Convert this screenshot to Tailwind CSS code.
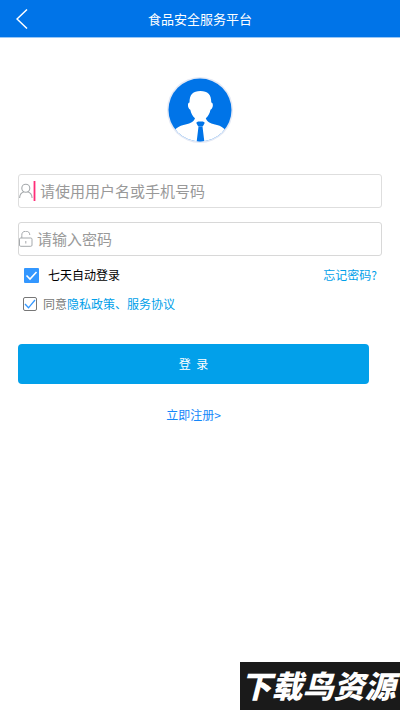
<!DOCTYPE html>
<html lang="zh-CN">
<head>
<meta charset="utf-8">
<meta name="viewport" content="width=device-width, initial-scale=1">
<title>食品安全服务平台</title>
<script src="https://cdn.jsdelivr.net/npm/@tailwindcss/browser@4"></script>
</head>
<body class="relative flex min-h-screen flex-col bg-white font-['Noto_Sans_CJK_SC',sans-serif] text-xs text-black">
<header class="grid h-[38px] grid-cols-[48px_1fr_48px] items-center border-b border-[#99c7f5] bg-[#0074e8] text-white">
  <button type="button" aria-label="返回" class="flex h-full items-center pl-4">
    <svg class="h-5 w-3" viewBox="0 0 12 20" fill="none" stroke="currentColor" stroke-width="1.5"><path d="M11 .5 1 10l10 9.500"/></svg>
  </button>
  <h1 class="text-center text-[13px] leading-[18px]">食品安全服务平台</h1>
</header>
<main class="flex flex-col px-[18px] pt-[38px]">
  <svg class="size-[68px] self-center" viewBox="0 0 68 68" role="img" aria-label="用户头像">
    <defs><clipPath id="disc"><circle cx="34" cy="34" r="31.500"/></clipPath></defs>
    <circle cx="34" cy="34" r="33" fill="#e4e9f5"/>
    <circle cx="34" cy="34" r="31.500" fill="#0074e8"/>
    <g clip-path="url(#disc)">
      <path fill="#fff" d="M34.400 15C27 15 23.500 18.500 23.500 26.500c-2.200.2-2.200 5.500.8 7.200.8 3.800 2.500 6.600 4.700 8.600-1.500 4.200-6 5.700-11.500 6.700-3.800.8-6.500 2.500-9.500 5.500V68h52V54.500c-3-3-5.200-4.700-9-5.500-5.500-1-9.700-2.500-11.200-6.700 2.200-2 3.900-4.800 4.700-8.600 3-1.700 3-7 .8-7.200C45.300 18.500 41.800 15 34.400 15Z"/>
      <path fill="#0074e8" d="M32 45.500h5l1.800 1.200-1.900 3.500h-4.800L30.200 46.700ZM32.500 50.500h4L38.500 67h-8Z"/>
    </g>
  </svg>
  <form class="mt-[30px] flex flex-col">
    <label class="flex h-[34px] items-center rounded-[3px] border border-[#dedede] text-[15px]">
      <svg class="h-4 w-[14px] shrink-0" viewBox="0 0 14 16" fill="none" stroke="#a5a9ac" stroke-width="1.100"><circle cx="6.800" cy="5.200" r="4"/><path d="M.6 15c.2-3.400 2-5.500 4.400-6.200M8.600 8.800c2.500.7 4.300 2.800 4.500 6.200"/></svg>
      <span class="ml-px h-5 w-px bg-[#ff2d78] outline-[#ff2d78]/40 outline-1 -outline-offset-1"></span>
      <input type="text" aria-label="用户名或手机号码" placeholder="请使用用户名或手机号码" class="ml-[5px] min-w-0 flex-1 bg-transparent leading-6 outline-none placeholder:text-[#999]">
    </label>
    <label class="mt-[14px] flex h-[34px] items-center rounded-[3px] border border-[#d8d8d8] text-[15px]">
      <svg class="h-4 w-[14px] shrink-0" viewBox="0 0 14 16" fill="none" stroke="#a5a9ac"><rect x=".5" y="7" width="12.500" height="8.300" rx="1.200"/><path d="M2.800 7V4.500a4 4 0 0 1 8-.5M6.800 10v2.500"/></svg>
      <input type="password" aria-label="密码" placeholder="请输入密码" class="ml-1 min-w-0 flex-1 bg-transparent leading-6 outline-none placeholder:text-[#999]">
    </label>
    <div class="mt-[9px] flex items-center justify-between pr-[5px] pl-[6px] leading-5">
      <label class="flex items-center">
        <span class="grid size-[15px] place-items-center">
          <input type="checkbox" checked class="col-start-1 row-start-1 size-[15px] appearance-none rounded-[1px] bg-[#3397ff]">
          <svg class="pointer-events-none col-start-1 row-start-1 size-[15px]" viewBox="0 0 15 15" fill="none" stroke="#fff" stroke-width="1.600"><path d="m2.500 7.500 3.500 3.500 6.500-7"/></svg>
        </span>
        <span class="ml-[9px]">七天自动登录</span>
      </label>
      <a href="#" class="text-[#00a0e9]">忘记密码?</a>
    </div>
    <div class="mt-[9px] flex items-center pl-[5px] leading-5">
      <span class="grid size-[14px] place-items-center">
        <input id="agree" type="checkbox" checked class="col-start-1 row-start-1 size-[14px] appearance-none rounded-[2px] border border-[#777] bg-white">
        <svg class="pointer-events-none col-start-1 row-start-1 size-[14px]" viewBox="0 0 14 14" fill="none" stroke="#3397ff" stroke-width="1.300"><path d="m2 7 3.500 3.800L12 3"/></svg>
      </span>
      <label for="agree" class="ml-[6px] text-[#777]">同意</label>
      <a href="#" class="text-[#00a0e9]">隐私政策、服务协议</a>
    </div>
    <div class="mt-[30px] flex flex-col items-center pr-[13px]">
      <button type="submit" class="h-10 w-full rounded-[4px] bg-[#02a0ea] leading-5 text-white">登&nbsp;&nbsp;录</button>
      <a href="#" class="mt-[21px] leading-5 text-[#1487fa]">立即注册&gt;</a>
    </div>
  </form>
</main>
<div class="absolute right-0 bottom-0 flex h-12 w-40 items-center justify-center bg-[#1a1a1a] pr-1 pb-1 text-[31px] leading-none font-black text-white italic">下载鸟资源</div>
</body>
</html>
